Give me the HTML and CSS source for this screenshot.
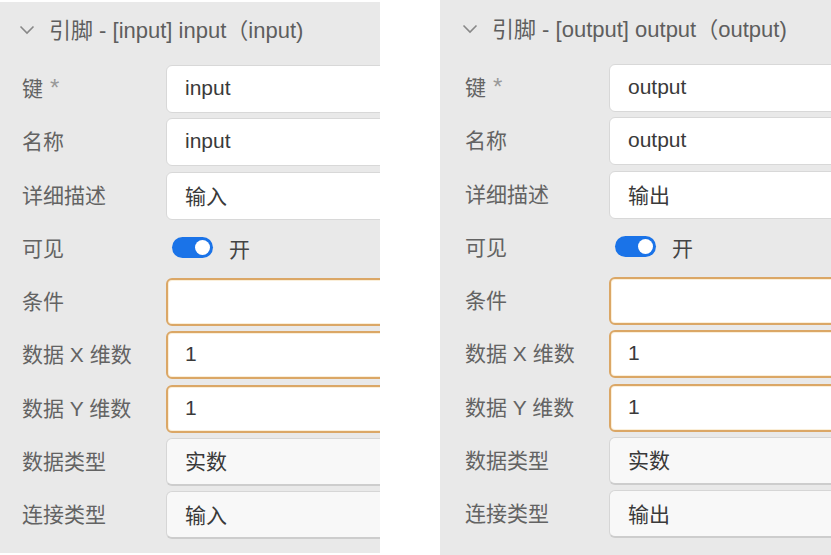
FILE: index.html
```html
<!DOCTYPE html>
<html lang="zh">
<head>
<meta charset="utf-8">
<link rel="stylesheet" href="styles.css">
</head>
<body>
<div class="stage">
  <section class="panel panel-left">
    <div class="inner">
      <div class="head">
        <svg class="chev" width="16" height="10" viewBox="0 0 16 10"><path d="M1.5 1.5 L8 8 L14.5 1.5" fill="none" stroke="#888" stroke-width="1.6"/></svg>
        <span>引脚 - [input] input（input)</span>
      </div>
      <div class="form">
        <div class="label">键 <span class="req">*</span></div><div class="field">input</div>
        <div class="label">名称</div><div class="field">input</div>
        <div class="label">详细描述</div><div class="field">输入</div>
        <div class="label">可见</div><div class="toggle-wrap"><span class="toggle"><span class="knob"></span></span><span class="on">开</span></div>
        <div class="label">条件</div><div class="field warn"></div>
        <div class="label">数据 X 维数</div><div class="field warn">1</div>
        <div class="label">数据 Y 维数</div><div class="field warn">1</div>
        <div class="label">数据类型</div><div class="field sel">实数</div>
        <div class="label">连接类型</div><div class="field sel">输入</div>
      </div>
    </div>
  </section>
  <section class="panel panel-right">
    <div class="inner">
      <div class="head">
        <svg class="chev" width="16" height="10" viewBox="0 0 16 10"><path d="M1.5 1.5 L8 8 L14.5 1.5" fill="none" stroke="#888" stroke-width="1.6"/></svg>
        <span>引脚 - [output] output（output)</span>
      </div>
      <div class="form">
        <div class="label">键 <span class="req">*</span></div><div class="field">output</div>
        <div class="label">名称</div><div class="field">output</div>
        <div class="label">详细描述</div><div class="field">输出</div>
        <div class="label">可见</div><div class="toggle-wrap"><span class="toggle"><span class="knob"></span></span><span class="on">开</span></div>
        <div class="label">条件</div><div class="field warn"></div>
        <div class="label">数据 X 维数</div><div class="field warn">1</div>
        <div class="label">数据 Y 维数</div><div class="field warn">1</div>
        <div class="label">数据类型</div><div class="field sel">实数</div>
        <div class="label">连接类型</div><div class="field sel">输出</div>
      </div>
    </div>
  </section>
</div>
</body>
</html>
```
FILE: styles.css
```css
html, body {
  margin: 0;
  padding: 0;
  background: #ffffff;
  overflow: hidden;
}
body {
  font-family: "Liberation Sans", "Noto Sans CJK SC", sans-serif;
  font-size: 21px;
  color: #555;
}
.stage {
  display: flex;
  gap: 60px;
  width: 831px;
  height: 555px;
}
.panel {
  background: #e9e9e9;
  overflow: hidden;
  box-sizing: border-box;
  flex: none;
}
.panel-left {
  width: 380px;
  margin-top: 2px;
  height: 551px;
  padding-left: 22px;
  padding-top: 7px;
}
.panel-right {
  width: 391px;
  height: 555px;
  padding-left: 25px;
  padding-top: 8px;
}
.inner {
  width: 700px;
}
.head {
  height: 40px;
  display: flex;
  align-items: center;
  gap: 14px;
  margin-left: -3px;
  font-size: 22px;
  color: #5e5e5e;
}
.head span {
  padding-bottom: 2px;
}
.chev {
  flex: none;
  margin-top: 1px;
}
.form {
  margin-top: 16px;
  display: grid;
  grid-template-columns: 144px 1fr;
  grid-auto-rows: 48px;
  row-gap: 5.25px;
}
.label {
  display: flex;
  align-items: center;
  color: #636363;
  white-space: nowrap;
  padding-bottom: 4px;
  box-sizing: border-box;
}
.req {
  color: #999;
  margin-left: 7px;
  font-size: 24px;
  line-height: 1;
  position: relative;
  top: 1px;
}
.field {
  box-sizing: border-box;
  height: 48px;
  border: 1px solid #d8d8d8;
  border-radius: 6px;
  background: #fff;
  display: flex;
  align-items: center;
  padding-left: 18px;
  padding-bottom: 2px;
  color: #3a3a3a;
}
.field.warn {
  border: 2px solid #dba766;
  box-shadow: inset 0 0 0 1px #fbefd9;
  padding-left: 17px;
}
.field.sel {
  background: #f8f8f8;
  border-color: #d6d6d6;
  border-bottom: 2px solid #cdcdcd;
}
.toggle-wrap {
  display: flex;
  align-items: center;
  padding-left: 6px;
  padding-bottom: 2px;
  gap: 16px;
  color: #444;
}
.toggle {
  width: 41px;
  height: 21px;
  border-radius: 11px;
  background: #1a73e8;
  display: flex;
  align-items: center;
  justify-content: flex-end;
  padding-right: 3px;
  box-sizing: border-box;
}
.knob {
  width: 15px;
  height: 15px;
  border-radius: 50%;
  background: #fff;
}
```
